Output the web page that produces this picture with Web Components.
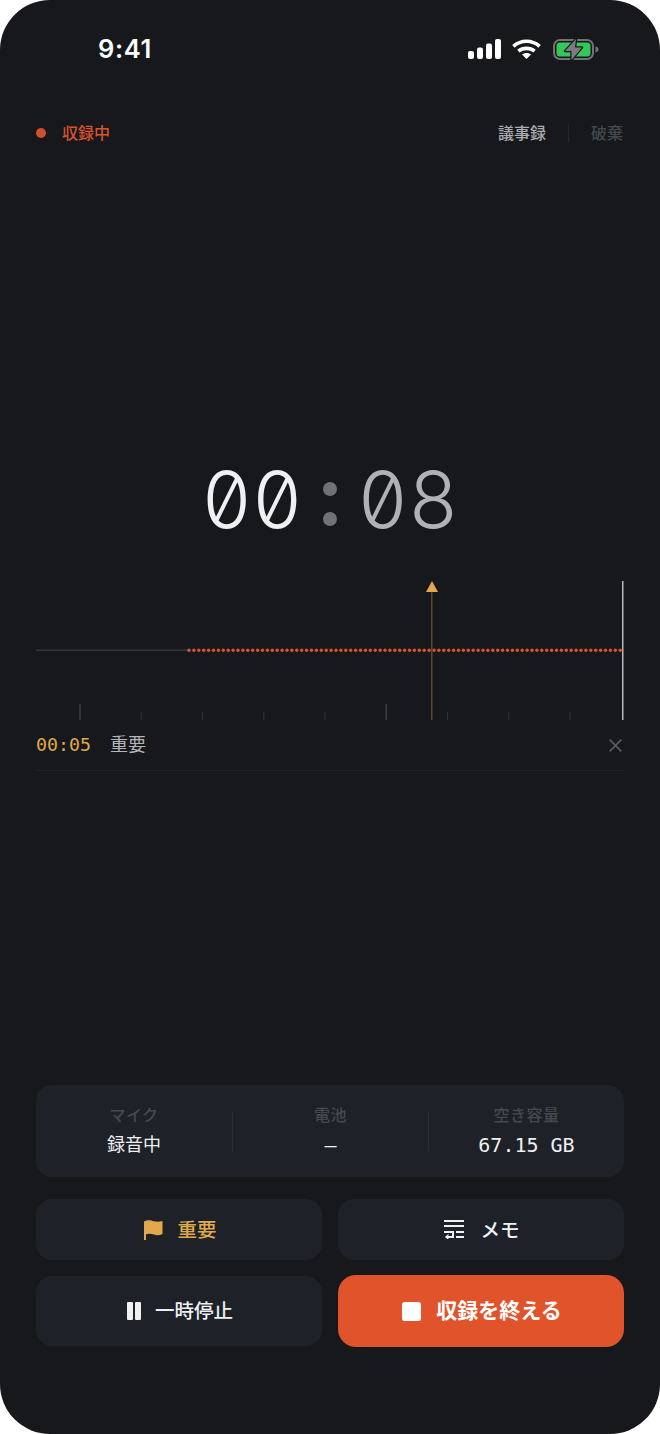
<!DOCTYPE html>
<html lang="ja">
<head>
<meta charset="utf-8">
<title>録音</title>
<style>
  html, body { margin: 0; background: #fff; }
  body { font-family: "Inter", "Noto Sans CJK JP", sans-serif; }
</style>
</head>
<body>
<rec-screen>
  <status-bar></status-bar>
  <rec-header></rec-header>
  <timer-display minutes="00" seconds="08"></timer-display>
  <wave-track></wave-track>
  <note-row time="00:05" label="重要"></note-row>
  <stat-card slot="bottom">
    <stat-item label="マイク" value="録音中"></stat-item>
    <stat-item label="電池" value="—" mono></stat-item>
    <stat-item label="空き容量" value="67.15 GB" mono></stat-item>
  </stat-card>
  <action-grid slot="bottom">
    <action-button kind="flag" tone="amber" style="height:61px">重要</action-button>
    <action-button kind="memo" style="height:61px;gap:16px">メモ</action-button>
    <action-button kind="pause" style="height:70px">一時停止</action-button>
    <action-button kind="stop" tone="primary" style="height:72px">収録を終える</action-button>
  </action-grid>
</rec-screen>

<script>
(function() {
  const CJK = '"Inter", "Noto Sans CJK JP", sans-serif';
  const MONO = '"DejaVu Sans Mono", "Noto Sans CJK JP", monospace';

  function define(name, html, init) {
    const template = document.createElement("template");
    template.innerHTML = html;
    customElements.define(name, class extends HTMLElement {
      constructor() {
        super();
        this.attachShadow({ mode: "open" });
        this.shadowRoot.appendChild(template.content.cloneNode(true));
      }
      connectedCallback() {
        if (init) init(this, this.shadowRoot);
      }
    });
  }

  define("rec-screen", `
    <style>
      :host { display: flex; flex-direction: column; box-sizing: border-box; width: 660px; height: 1434px;
        background: #16181c; border-radius: 50px; overflow: hidden; font-family: ${CJK}; }
      .bottom { margin-top: auto; padding: 0 36px 87px; display: flex; flex-direction: column; gap: 22px; }
    </style>
    <slot></slot>
    <div class="bottom"><slot name="bottom"></slot></div>
  `);

  define("status-bar", `
    <style>
      :host { display: flex; align-items: center; justify-content: space-between; height: 36px;
        padding: 31px 61px 0 98px; }
      .time { font: 600 25.500px/36px "Inter", sans-serif; color: #fff; letter-spacing: 0.6px; }
      .icons { display: flex; align-items: center; gap: 12px; }
      svg { display: block; }
    </style>
    <span class="time">9:41</span>
    <div class="icons">
      <svg width="33" height="20" viewBox="0 0 33 20" style="margin-right:-1px">
        <rect x="0" y="12" width="6" height="8" rx="2" fill="#fff"/>
        <rect x="9" y="8.500" width="6" height="11.500" rx="2" fill="#fff"/>
        <rect x="18" y="4.500" width="6" height="15.500" rx="2" fill="#fff"/>
        <rect x="27" y="0" width="6" height="20" rx="2" fill="#fff"/>
      </svg>
      <svg width="29" height="20" viewBox="0 0 29 20" fill="none" stroke="#fff" stroke-width="3.600">
        <path d="M1.400 7.400C9 .6 20 .6 27.600 7.400"/>
        <path d="M6.400 12.200C11 8.400 18 8.400 22.600 12.200"/>
        <path d="M14.500 20 10 15.600C12.400 13.600 16.600 13.600 19 15.600Z" fill="#fff" stroke="none"/>
      </svg>
      <svg width="46" height="23" viewBox="0 0 46 23">
        <rect x="1" y="2" width="39" height="19" rx="6" fill="none" stroke="#707277" stroke-width="2"/>
        <rect x="3.500" y="4.500" width="34" height="14" rx="3.500" fill="#34c759"/>
        <path d="M42.500 8.500c2 .4 3 1.600 3 3s-1 2.600-3 3z" fill="#707277"/>
        <path d="M23 1 12 13h6.500V22L29 9.500H22Z" fill="#7a7c80" stroke="#16181c" stroke-width="2.400" paint-order="stroke" stroke-linejoin="round"/>
      </svg>
    </div>
  `);

  define("rec-header", `
    <style>
      :host { display: flex; align-items: center; height: 24px; padding: 0 37px 0 36px; margin-top: 54px;
        font: 500 16px/24px ${CJK}; }
      .dot { width: 10px; height: 10px; border-radius: 50%; background: #d14f2f; margin-right: 16px; }
      .live { color: #d9512d; }
      .actions { margin-left: auto; display: flex; align-items: center; }
      .minutes { color: #a9acb0; }
      .sep { width: 1px; height: 18px; background: #24262c; margin: 0 22px; }
      .discard { color: #44474e; }
    </style>
    <span class="dot"></span>
    <span class="live">収録中</span>
    <div class="actions">
      <span class="minutes">議事録</span>
      <span class="sep"></span>
      <span class="discard">破棄</span>
    </div>
  `);

  define("timer-display", `
    <style>
      :host { display: flex; justify-content: center; align-items: center; height: 84px; margin-top: 313px;
        font: 350 78px/84px "Inter", sans-serif; font-feature-settings: "zero" 1, "tnum" 1; color: #eef0f2; }
      .d { display: inline-block; width: 50.500px; text-align: center; }
      .colon { display: flex; flex-direction: column; justify-content: center; gap: 16px; width: 55px; align-items: center; padding-top: 8px; }
      .colon i { display: block; width: 14px; height: 14px; border-radius: 50%; background: #6f7176; }
      .sec { color: #b0b1b4; }
    </style>
    <span class="min"></span>
    <span class="colon"><i></i><i></i></span>
    <span class="sec"></span>
  `, (el, root) => {
    const digits = s => [...s].map(c => `<span class="d">${c}</span>`).join("");
    root.querySelector(".min").innerHTML = digits(el.getAttribute("minutes"));
    root.querySelector(".sec").innerHTML = digits(el.getAttribute("seconds"));
  });

  define("wave-track", `
    <style>
      :host { display: block; margin: 38px 36px 0; height: 140px; }
      svg { display: block; overflow: visible; }
    </style>
    <svg width="588" height="140" viewBox="36 580 588 140"></svg>
  `, (el, root) => {
    let out = `<rect x="36" y="649.500" width="152" height="1.500" fill="#33353b"/>`;
    for (let x = 189; x < 622; x += 4.9) {
      out += `<circle cx="${x.toFixed(2)}" cy="650.300" r="1.700" fill="#dc522c"/>`;
    }
    for (let i = 0; i < 9; i++) {
      const x = 80 + i * 61.250;
      const major = i % 5 === 0;
      out += `<rect x="${(x - (major ? 0.75 : 0.5)).toFixed(2)}" y="${major ? 704 : 712}" width="${major ? 1.500 : 1}" height="${major ? 16 : 8}" fill="${major ? "#3a3d45" : "#2e3037"}"/>`;
    }
    out += `<rect x="431" y="592" width="1.500" height="128" fill="#59482a"/>`;
    out += `<path d="M432 581 438 592H426Z" fill="#dfa94c"/>`;
    out += `<rect x="622" y="581" width="1.500" height="139" fill="#b5b6b9"/>`;
    root.querySelector("svg").innerHTML = out;
  });

  define("note-row", `
    <style>
      :host { display: flex; align-items: center; height: 50px; margin: 0 36px; border-bottom: 1px solid #202228; }
      .time { font: 400 18.300px/50px ${MONO}; color: #dfa94c; margin-right: 19px; }
      .label { font: 400 18px/50px ${CJK}; color: #b4b5b8; }
      svg { margin-left: auto; margin-right: 2px; display: block; }
    </style>
    <span class="time"></span>
    <span class="label"></span>
    <svg width="13" height="13" viewBox="0 0 13 13" stroke="#565961" stroke-width="1.800"><path d="M.7.7 12.300 12.300M12.300.7.7 12.300"/></svg>
  `, (el, root) => {
    root.querySelector(".time").textContent = el.getAttribute("time");
    root.querySelector(".label").textContent = el.getAttribute("label");
  });

  define("stat-card", `
    <style>
      :host { display: grid; grid-template-columns: 197px 196px 195px; height: 92px; align-items: center;
        background: #1e2128; border-radius: 16px; }
      ::slotted(stat-item:not(:last-child)) { border-right: 1px solid #292c33; }
    </style>
    <slot></slot>
  `);

  define("stat-item", `
    <style>
      :host { display: flex; flex-direction: column; align-items: center; justify-content: center; box-sizing: border-box; height: 40px; }
      .label { font: 500 16px/22px ${CJK}; color: #464950; letter-spacing: 0.5px; }
      .value { font: 400 18px/26px ${CJK}; color: #eef0f2; margin-top: 6px; }
      :host([mono]) .value { font: 400 20px/26px ${MONO}; }
    </style>
    <span class="label"></span>
    <span class="value"></span>
  `, (el, root) => {
    root.querySelector(".label").textContent = el.getAttribute("label");
    root.querySelector(".value").textContent = el.getAttribute("value");
  });

  define("action-grid", `
    <style>
      :host { display: grid; grid-template-columns: 1fr 1fr; gap: 15px 16px; align-items: center; }
    </style>
    <slot></slot>
  `);

  const ICONS = {
    flag: `<svg width="20" height="20" viewBox="0 0 20 20" fill="#dfa94c"><path d="M1 1.500C5-.8 8 .5 11 1.300c3 .8 5.500.5 8.500-.3v13c-3 1.500-5.500 1.500-8.500.6-3-.9-5.500-1.400-8-.4V20H1Z"/></svg>`,
    memo: `<svg width="20" height="19" viewBox="0 0 20 19" fill="none" stroke="#eef0f2" stroke-width="2"><path d="M0 1h20M0 6h20M12 12h8M12 17h8M0 12h9v5H4"/><path d="M.8 17 4.500 14v6Z" fill="#eef0f2" stroke="none"/></svg>`,
    pause: `<svg width="14" height="18" viewBox="0 0 14 18" fill="#eef0f2"><rect width="6" height="18" rx="1"/><rect x="8" width="6" height="18" rx="1"/></svg>`,
    stop: `<svg width="19" height="19" viewBox="0 0 19 19" fill="#fff"><rect width="19" height="19" rx="2.500"/></svg>`
  };

  define("action-button", `
    <style>
      :host { display: flex; align-items: center; justify-content: center; gap: 14px; box-sizing: border-box; padding-left: 2px;
        background: #1e2128; border-radius: 16px; color: #eef0f2; font: 500 19.500px/24px ${CJK}; }
      :host([tone="amber"]) { color: #dfa94c; }
      :host([tone="primary"]) { background: #e0532b; color: #fff; font-weight: 600; font-size: 21px; border-radius: 18px; gap: 15px; }
      .icon { display: flex; }
    </style>
    <span class="icon"></span>
    <slot></slot>
  `, (el, root) => {
    root.querySelector(".icon").innerHTML = ICONS[el.getAttribute("kind")];
  });
})();
</script>
</body>
</html>
